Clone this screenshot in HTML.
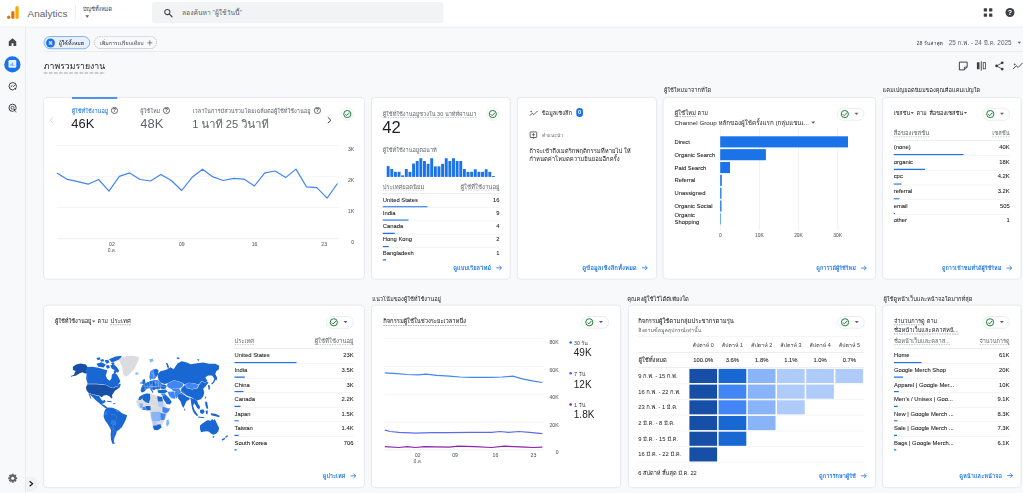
<!DOCTYPE html>
<html lang="th">
<head>
<meta charset="utf-8">
<title>Analytics</title>
<style>
html,body{margin:0;padding:0}
body{width:1023px;height:493px;overflow:hidden;background:#f8f9fa;position:relative;font-family:"Liberation Sans","Loma","Garuda","Tahoma","Leelawadee UI","Noto Sans Thai Looped","Noto Sans Thai","Noto Sans Thai UI",sans-serif;color:#202124}
#root{position:absolute;left:0;top:0;width:4092px;height:1972px;transform:scale(0.25);transform-origin:0 0;overflow:hidden}

.t{position:absolute;white-space:nowrap}
.card{background:#fff;border:3.2px solid #dfe1e5;border-radius:15.2px;box-sizing:border-box}
</style>
</head>
<body>
<div id="root">
<div style="position:absolute;left:0px;top:0px;width:4092px;height:106.8px;background:#fff;border-bottom:2.4px solid #dadce0;"></div>
<svg style="position:absolute;left:27.6px;top:24px;overflow:visible" width="48" height="52" viewBox="0 0 12 13"><rect x="8.4" y="0" width="3.3" height="12.9" rx="1.65" fill="#f9ab00"/><rect x="4.2" y="5.0" width="3.3" height="7.9" rx="1.65" fill="#e37400"/><circle cx="1.65" cy="11.25" r="1.65" fill="#e37400"/></svg>
<div class="t" style="top:34.12px;font-size:39.8px;line-height:39.8px;color:#5f6368;left:110.4px;">Analytics</div>
<div style="position:absolute;left:300px;top:20px;width:2px;height:58px;background:#dadce0;"></div>
<div class="t" style="top:27.12px;font-size:21.96px;line-height:21.96px;color:#3c4043;left:332px;width:117.96px;clip-path:inset(-16px -1.2px -16px -1.2px);">บัญชีทั้งหมด</div>
<svg style="position:absolute;left:340.8px;top:60.8px;overflow:visible" width="16" height="9.6" viewBox="0 0 4 2.4"><path d="M0 0h4l-2 2.4z" fill="#5f6368"/></svg>
<div style="position:absolute;left:608px;top:8px;width:1166px;height:84.8px;background:#f1f3f4;border-radius:12px;"></div>
<svg style="position:absolute;left:656px;top:35.2px;overflow:visible" width="34.4" height="34.4" viewBox="0 0 8.6 8.6"><circle cx="3.3" cy="3.3" r="2.6" fill="none" stroke="#44474a" stroke-width="1.05"/><path d="M5.2 5.2L8 8" stroke="#44474a" stroke-width="1.2" stroke-linecap="round"/></svg>
<div class="t" style="top:38.6px;font-size:26.84px;line-height:26.84px;color:#5f6368;left:728px;width:242.08px;clip-path:inset(-16px -1.2px -16px -1.2px);">ลองค้นหา "ผู้ใช้วันนี้"</div>
<svg style="position:absolute;left:3935.2px;top:33.2px;overflow:visible" width="35.2" height="34.4" viewBox="0 0 8.8 8.6"><rect x="0" y="0" width="3.3" height="3.3" rx="0.5" fill="#3c4043"/><rect x="0" y="5.2" width="3.3" height="3.3" rx="0.5" fill="#3c4043"/><rect x="5.3" y="0" width="3.3" height="3.3" rx="0.5" fill="#3c4043"/><rect x="5.3" y="5.2" width="3.3" height="3.3" rx="0.5" fill="#3c4043"/></svg>
<svg style="position:absolute;left:4022px;top:32px;overflow:visible" width="36" height="36" viewBox="0 0 9 9"><circle cx="4.5" cy="4.5" r="4.5" fill="#3c4043"/><text x="4.5" y="7" font-size="7" font-weight="700" text-anchor="middle" fill="#fff" font-family="Liberation Sans,sans-serif">?</text></svg>
<div style="position:absolute;left:0px;top:108.8px;width:100px;height:1863.2px;background:#f8f9fa;border-right:2.4px solid #dadce0;"></div>
<svg style="position:absolute;left:35.2px;top:153.2px;overflow:visible" width="30" height="30.8" viewBox="0 0 7.5 7.7"><path d="M3.75 0L0 3.2V7.7H2.8V5H4.7V7.7H7.5V3.2Z" fill="#46494d"/></svg>
<div style="position:absolute;left:17.2px;top:224.8px;width:65.2px;height:65.2px;background:#1a73e8;border-radius:50%;"></div>
<svg style="position:absolute;left:34.4px;top:240px;overflow:visible" width="31.2" height="31.2" viewBox="0 0 7.8 7.8"><rect x="0" y="0" width="7.8" height="7.8" rx="1.2" fill="#e8f0fe"/><path d="M2.5 5.9V4.2M3.9 5.9V2.6M5.3 5.9V4.8" stroke="#4285f4" stroke-width="0.8"/></svg>
<svg style="position:absolute;left:32.8px;top:327.2px;overflow:visible" width="36" height="36" viewBox="0 0 9 9"><circle cx="4.5" cy="4.5" r="3.7" fill="none" stroke="#3c4043" stroke-width="1"/><path d="M2.4 5.2L4 3.8L5 4.8L7.2 2.8" fill="none" stroke="#3c4043" stroke-width="0.9"/><circle cx="7" cy="7" r="1.6" fill="#f8f9fa"/><circle cx="7" cy="7" r="1" fill="#3c4043"/></svg>
<svg style="position:absolute;left:32.8px;top:414.4px;overflow:visible" width="36" height="36" viewBox="0 0 9 9"><circle cx="4.3" cy="4.3" r="3.6" fill="none" stroke="#3c4043" stroke-width="1"/><circle cx="4.3" cy="4.3" r="1.5" fill="none" stroke="#3c4043" stroke-width="0.9"/><path d="M4.6 4.6L8.8 6.2L7 7L8.6 8.8L7.9 9.2L6.4 7.5L5.6 8.8Z" fill="#3c4043" stroke="#f8f9fa" stroke-width="0.5"/></svg>
<svg style="position:absolute;left:33.2px;top:1894.8px;overflow:visible" width="35.6" height="35.6" viewBox="0 0 8.9 8.9"><g transform="translate(4.45,4.45)"><rect x="-1.05" y="-4.45" width="2.1" height="8.9" rx="0.4" fill="#5f6368" transform="rotate(0)"/><rect x="-1.05" y="-4.45" width="2.1" height="8.9" rx="0.4" fill="#5f6368" transform="rotate(45)"/><rect x="-1.05" y="-4.45" width="2.1" height="8.9" rx="0.4" fill="#5f6368" transform="rotate(90)"/><rect x="-1.05" y="-4.45" width="2.1" height="8.9" rx="0.4" fill="#5f6368" transform="rotate(135)"/><circle r="3.3" fill="#5f6368"/><circle r="1.55" fill="#f8f9fa"/></g></svg>
<div style="position:absolute;left:102.8px;top:1908px;width:44.8px;height:52.8px;background:#f1f3f4;border-radius:0 26.4px 26.4px 0;box-shadow:0 1.2px 3.2px rgba(60,64,67,.18);"></div>
<svg style="position:absolute;left:116px;top:1922.8px;overflow:visible" width="17.6" height="24" viewBox="0 0 4.4 6"><path d="M0.6 0.5L3.6 3L0.6 5.5" fill="none" stroke="#202124" stroke-width="1.25"/></svg>
<div style="position:absolute;left:175.2px;top:144.8px;width:184.8px;height:51.2px;background:#e8f0fe;border:2.4px solid #1a73e8;border-radius:26px;box-sizing:border-box;"></div>
<div style="position:absolute;left:183.6px;top:153.6px;width:36px;height:36px;background:#1a73e8;border-radius:50%;"></div>
<div class="t" style="top:162.6px;font-size:18.4px;line-height:18.4px;color:#fff;font-weight:700;left:185.6px;width:32px;text-align:center;">N</div>
<div class="t" style="top:162.76px;font-size:20.96px;line-height:20.96px;color:#202124;left:234.8px;width:104.04px;clip-path:inset(-16px -1.2px -16px -1.2px);">ผู้ใช้ทั้งหมด</div>
<svg style="position:absolute;left:376px;top:145.2px;overflow:visible" width="252" height="50.4" viewBox="0 0 63 12.6"><rect x="0.3" y="0.3" width="62.4" height="12" rx="6" fill="none" stroke="#80868b" stroke-width="0.55" stroke-dasharray="1.1 0.9"/></svg>
<div class="t" style="top:162.76px;font-size:21px;line-height:21px;color:#3c4043;left:400px;width:176.72px;clip-path:inset(-16px -1.2px -16px -1.2px);">เพิ่มการเปรียบเทียบ</div>
<svg style="position:absolute;left:589.2px;top:160.8px;overflow:visible" width="20.8" height="20.8" viewBox="0 0 5.2 5.2"><path d="M2.6 0V5.2M0 2.6H5.2" stroke="#3c4043" stroke-width="0.6"/></svg>
<div style="position:absolute;left:175.2px;top:204px;width:3916.8px;height:2px;background:#dadce0;"></div>
<div class="t" style="top:162.4px;font-size:20.92px;line-height:20.92px;color:#3c4043;left:3666px;width:108.04px;clip-path:inset(-16px -1.2px -16px -1.2px);">28 วันล่าสุด</div>
<div class="t" style="top:160.44px;font-size:25.4px;line-height:25.4px;color:#5f6368;left:3795.2px;width:252.84px;clip-path:inset(-16px -1.2px -16px -1.2px);">25 ก.พ. - 24 มี.ค. 2025</div>
<svg style="position:absolute;left:4070px;top:167.2px;overflow:visible" width="14.4" height="8" viewBox="0 0 3.6 2"><path d="M0 0h3.6l-1.8 2z" fill="#5f6368"/></svg>
<div class="t" style="top:247.12px;font-size:34.76px;line-height:34.76px;color:#202124;left:175.2px;width:247.24px;clip-path:inset(-16px -1.2px -16px -1.2px);">ภาพรวมรายงาน</div>
<svg style="position:absolute;left:175.2px;top:290.4px;overflow:visible" width="246" height="4" viewBox="0 0 61.5 1"><line x1="0" x2="61.5" y1="0.5" y2="0.5" stroke="#5f6368" stroke-width="0.6" stroke-dasharray="3.6 1.5"/></svg>
<svg style="position:absolute;left:3835.2px;top:245.6px;overflow:visible" width="36" height="36" viewBox="0 0 9 9"><path d="M0.6 0.6H8.4V5.6L5.6 8.4H0.6Z" fill="none" stroke="#3c4043" stroke-width="1" stroke-linejoin="round"/><path d="M5.6 8.4V5.6H8.4" fill="none" stroke="#3c4043" stroke-width="0.9"/></svg>
<svg style="position:absolute;left:3906px;top:244.8px;overflow:visible" width="38.4" height="38.4" viewBox="0 0 9.6 9.6"><rect x="0.4" y="1" width="2.6" height="7" fill="#3c4043"/><rect x="4.3" y="0" width="0.9" height="9.4" fill="#3c4043"/><rect x="6.7" y="1.4" width="2.3" height="6.2" fill="none" stroke="#3c4043" stroke-width="0.8"/></svg>
<svg style="position:absolute;left:3980px;top:244.8px;overflow:visible" width="36" height="37.6" viewBox="0 0 9 9.4"><circle cx="7.2" cy="1.6" r="1.4" fill="#3c4043"/><circle cx="1.6" cy="4.7" r="1.4" fill="#3c4043"/><circle cx="7.2" cy="7.8" r="1.4" fill="#3c4043"/><path d="M7.2 1.6L1.6 4.7L7.2 7.8" fill="none" stroke="#3c4043" stroke-width="0.8"/></svg>
<svg style="position:absolute;left:4051.2px;top:246.4px;overflow:visible" width="40.8" height="34.4" viewBox="0 0 10.2 8.6"><path d="M0.3 7.6L3.4 4.2L5.4 6L9.8 1.4" fill="none" stroke="#3c4043" stroke-width="0.9"/><path d="M2 1.6l0.4 0.9 0.9 0.4-0.9 0.4-0.4 0.9-0.4-0.9-0.9-0.4 0.9-0.4z" fill="#3c4043"/></svg>
<div class="card" style="position:absolute;left:173.2px;top:388.4px;width:1285.6px;height:730px;"></div>
<div class="card" style="position:absolute;left:1484px;top:388.4px;width:557.6px;height:730px;"></div>
<div class="card" style="position:absolute;left:2068px;top:388.4px;width:560.4px;height:730px;"></div>
<div class="card" style="position:absolute;left:2651.2px;top:388.4px;width:852.4px;height:730px;"></div>
<div class="card" style="position:absolute;left:3528.8px;top:388.4px;width:556.8px;height:730px;"></div>
<div class="card" style="position:absolute;left:173.2px;top:1219.2px;width:1285.6px;height:732.4px;"></div>
<div class="card" style="position:absolute;left:1484px;top:1219.2px;width:1000px;height:732.4px;"></div>
<div class="card" style="position:absolute;left:2511.6px;top:1219.2px;width:992px;height:732.4px;"></div>
<div class="card" style="position:absolute;left:3528.8px;top:1219.2px;width:556.8px;height:732.4px;"></div>
<div style="position:absolute;left:288px;top:389.2px;width:181.2px;height:5.6px;background:#1a73e8;"></div>
<div class="t" style="top:433.36px;font-size:22.36px;line-height:22.36px;color:#1a73e8;left:286.8px;width:147.32px;clip-path:inset(-16px -1.2px -16px -1.2px);-webkit-text-stroke:0.16px currentColor;">ผู้ใช้ที่ใช้งานอยู่</div>
<svg style="position:absolute;left:443.6px;top:428.4px;overflow:visible" width="27.6" height="27.6" viewBox="0 0 6.4 6.4"><circle cx="3.2" cy="3.2" r="2.85" fill="none" stroke="#3c4043" stroke-width="0.7"/><text x="3.2" y="4.95" font-size="4.9" text-anchor="middle" fill="#3c4043" font-family="Liberation Sans,sans-serif" font-weight="700">?</text></svg>
<div class="t" style="top:470.2px;font-size:51.6px;line-height:51.6px;color:#202124;left:285.2px;">46K</div>
<div class="t" style="top:433.32px;font-size:22.48px;line-height:22.48px;color:#5f6368;left:561.2px;width:82.04px;clip-path:inset(-16px -1.2px -16px -1.2px);">ผู้ใช้ใหม่</div>
<svg style="position:absolute;left:652px;top:428.4px;overflow:visible" width="27.6" height="27.6" viewBox="0 0 6.4 6.4"><circle cx="3.2" cy="3.2" r="2.85" fill="none" stroke="#3c4043" stroke-width="0.7"/><text x="3.2" y="4.95" font-size="4.9" text-anchor="middle" fill="#3c4043" font-family="Liberation Sans,sans-serif" font-weight="700">?</text></svg>
<div class="t" style="top:470.2px;font-size:51.6px;line-height:51.6px;color:#5f6368;left:561.2px;">48K</div>
<div class="t" style="top:433.32px;font-size:22.48px;line-height:22.48px;color:#5f6368;left:770.8px;width:473.4px;clip-path:inset(-16px -1.2px -16px -1.2px);">เวลาในการมีส่วนร่วมโดยเฉลี่ยต่อผู้ใช้ที่ใช้งานอยู่</div>
<svg style="position:absolute;left:1256.4px;top:428.4px;overflow:visible" width="27.6" height="27.6" viewBox="0 0 6.4 6.4"><circle cx="3.2" cy="3.2" r="2.85" fill="none" stroke="#3c4043" stroke-width="0.7"/><text x="3.2" y="4.95" font-size="4.9" text-anchor="middle" fill="#3c4043" font-family="Liberation Sans,sans-serif" font-weight="700">?</text></svg>
<div class="t" style="top:476.4px;font-size:44.52px;line-height:44.52px;color:#5f6368;left:769.2px;width:307.96px;clip-path:inset(-16px -1.2px -16px -1.2px);">1 นาที 25 วินาที</div>
<svg style="position:absolute;left:199.2px;top:468.4px;overflow:visible" width="14.4" height="25.6" viewBox="0 0 3.6 6.4"><path d="M3.2 0.4L0.5 3.2L3.2 6" fill="none" stroke="#bdc1c6" stroke-width="0.7"/></svg>
<svg style="position:absolute;left:1309.6px;top:468.4px;overflow:visible" width="14.4" height="25.6" viewBox="0 0 3.6 6.4"><path d="M0.3 0.3L3.4 3.3L0.3 6.3" fill="none" stroke="#3c4043" stroke-width="1.0"/></svg>
<div style="position:absolute;left:1363.2px;top:430.4px;width:51.2px;height:51.2px;background:#fff;border-radius:50%;border:2.4px solid #dadce0;box-sizing:border-box;"></div>
<svg style="position:absolute;left:1371.6px;top:438.8px;overflow:visible" width="34.4" height="34.4" viewBox="0 0 8.6 8.6"><circle cx="4.3" cy="4.3" r="3.6" fill="none" stroke="#188038" stroke-width="1.0"/><path d="M2.3 4.5L3.7 5.9L6.5 2.9" fill="none" stroke="#188038" stroke-width="1.0"/></svg>
<svg style="position:absolute;left:0px;top:0px;overflow:visible" width="4092" height="1972" viewBox="0 0 1023 493"><line x1="56.9" x2="339" y1="145.4" y2="145.4" stroke="#e8eaed" stroke-width="0.5"/><line x1="56.9" x2="339" y1="176.4" y2="176.4" stroke="#e8eaed" stroke-width="0.5"/><line x1="56.9" x2="339" y1="207.5" y2="207.5" stroke="#e8eaed" stroke-width="0.5"/><line x1="56.9" x2="339" y1="238.7" y2="238.7" stroke="#dadce0" stroke-width="0.5"/><polyline points="57.0,172.9 67.4,179.4 77.8,181.6 88.2,184.2 98.6,179.5 109.0,191.2 119.3,176.4 129.7,172.9 140.1,179.5 150.5,181.0 160.9,174.4 171.3,180.5 181.7,190.5 192.1,177.3 202.5,169.2 212.9,176.9 223.2,180.5 233.6,178.3 244.0,179.1 254.4,186.0 264.8,172.8 275.2,171.0 285.6,177.6 296.0,169.1 306.4,186.8 316.8,187.6 327.1,198.1 337.5,183.5" fill="none" stroke="#4285f4" stroke-width="1.2" stroke-linejoin="round"/></svg>
<div class="t" style="top:587px;font-size:20.4px;line-height:20.4px;color:#5f6368;right:2675.2px;text-align:right;-webkit-text-stroke:0.28px currentColor;">3K</div>
<div class="t" style="top:711px;font-size:20.4px;line-height:20.4px;color:#5f6368;right:2675.2px;text-align:right;-webkit-text-stroke:0.28px currentColor;">2K</div>
<div class="t" style="top:835.4px;font-size:20.4px;line-height:20.4px;color:#5f6368;right:2675.2px;text-align:right;-webkit-text-stroke:0.28px currentColor;">1K</div>
<div class="t" style="top:960.2px;font-size:20.4px;line-height:20.4px;color:#5f6368;right:2675.2px;text-align:right;-webkit-text-stroke:0.28px currentColor;">0</div>
<div class="t" style="top:965px;font-size:20.4px;line-height:20.4px;color:#5f6368;left:407.6px;width:80px;text-align:center;-webkit-text-stroke:0.28px currentColor;">02</div>
<div class="t" style="top:965px;font-size:20.4px;line-height:20.4px;color:#5f6368;left:687.2px;width:80px;text-align:center;-webkit-text-stroke:0.28px currentColor;">09</div>
<div class="t" style="top:965px;font-size:20.4px;line-height:20.4px;color:#5f6368;left:978.4px;width:80px;text-align:center;-webkit-text-stroke:0.28px currentColor;">16</div>
<div class="t" style="top:965px;font-size:20.4px;line-height:20.4px;color:#5f6368;left:1256.8px;width:80px;text-align:center;-webkit-text-stroke:0.28px currentColor;">23</div>
<div class="t" style="top:989.96px;font-size:19.2px;line-height:19.2px;color:#5f6368;left:428.52px;width:38.16px;text-align:center;clip-path:inset(-16px -1.2px -16px -1.2px);">มี.ค.</div>
<div class="t" style="top:444.52px;font-size:22.44px;line-height:22.44px;color:#5f6368;left:1531.2px;width:376.36px;clip-path:inset(-16px -1.2px -16px -1.2px);">ผู้ใช้ที่ใช้งานอยู่ช่วงใน 30 นาทีที่ผ่านมา</div>
<div style="position:absolute;left:1531.2px;top:468.8px;width:375.2px;height:2px;border-top:2px dashed #9aa0a6;"></div>
<div style="position:absolute;left:1945.6px;top:430.4px;width:51.2px;height:51.2px;background:#fff;border-radius:50%;border:2.4px solid #dadce0;box-sizing:border-box;"></div>
<svg style="position:absolute;left:1954px;top:438.8px;overflow:visible" width="34.4" height="34.4" viewBox="0 0 8.6 8.6"><circle cx="4.3" cy="4.3" r="3.6" fill="none" stroke="#188038" stroke-width="1.0"/><path d="M2.3 4.5L3.7 5.9L6.5 2.9" fill="none" stroke="#188038" stroke-width="1.0"/></svg>
<div class="t" style="top:474.8px;font-size:66.4px;line-height:66.4px;color:#202124;left:1529.2px;">42</div>
<div class="t" style="top:588.56px;font-size:22.36px;line-height:22.36px;color:#5f6368;left:1531.2px;width:217.84px;clip-path:inset(-16px -1.2px -16px -1.2px);">ผู้ใช้ที่ใช้งานอยู่ต่อนาที</div>
<svg style="position:absolute;left:0px;top:0px;overflow:visible" width="4092" height="1972" viewBox="0 0 1023 493"><rect x="386.70" y="166.10" width="2.9" height="10.80" fill="#1a73e8"/><rect x="390.33" y="169.02" width="2.9" height="7.88" fill="#1a73e8"/><rect x="393.96" y="171.82" width="2.9" height="5.08" fill="#1a73e8"/><rect x="397.59" y="171.82" width="2.9" height="5.08" fill="#1a73e8"/><rect x="401.22" y="175.38" width="2.9" height="1.52" fill="#1a73e8"/><rect x="404.85" y="169.02" width="2.9" height="7.88" fill="#1a73e8"/><rect x="408.48" y="171.82" width="2.9" height="5.08" fill="#1a73e8"/><rect x="412.11" y="163.56" width="2.9" height="13.34" fill="#1a73e8"/><rect x="415.74" y="161.02" width="2.9" height="15.88" fill="#1a73e8"/><rect x="419.37" y="158.22" width="2.9" height="18.68" fill="#1a73e8"/><rect x="423.00" y="161.02" width="2.9" height="15.88" fill="#1a73e8"/><rect x="426.63" y="163.81" width="2.9" height="13.09" fill="#1a73e8"/><rect x="430.26" y="158.22" width="2.9" height="18.68" fill="#1a73e8"/><rect x="433.89" y="166.35" width="2.9" height="10.55" fill="#1a73e8"/><rect x="437.52" y="166.35" width="2.9" height="10.55" fill="#1a73e8"/><rect x="441.15" y="163.81" width="2.9" height="13.09" fill="#1a73e8"/><rect x="444.78" y="158.22" width="2.9" height="18.68" fill="#1a73e8"/><rect x="448.41" y="161.02" width="2.9" height="15.88" fill="#1a73e8"/><rect x="452.04" y="158.22" width="2.9" height="18.68" fill="#1a73e8"/><rect x="455.67" y="161.02" width="2.9" height="15.88" fill="#1a73e8"/><rect x="459.30" y="161.02" width="2.9" height="15.88" fill="#1a73e8"/><rect x="462.93" y="169.02" width="2.9" height="7.88" fill="#1a73e8"/><rect x="466.56" y="171.82" width="2.9" height="5.08" fill="#1a73e8"/><rect x="470.19" y="171.82" width="2.9" height="5.08" fill="#1a73e8"/><rect x="473.82" y="169.28" width="2.9" height="7.62" fill="#1a73e8"/><rect x="477.45" y="171.82" width="2.9" height="5.08" fill="#1a73e8"/><rect x="481.08" y="171.82" width="2.9" height="5.08" fill="#1a73e8"/><rect x="484.71" y="169.28" width="2.9" height="7.62" fill="#1a73e8"/><rect x="488.34" y="171.82" width="2.9" height="5.08" fill="#1a73e8"/><rect x="491.97" y="176.01" width="2.9" height="0.89" fill="#1a73e8"/></svg>
<div class="t" style="top:735.32px;font-size:23.36px;line-height:23.36px;color:#5f6368;left:1531.2px;width:168.08px;clip-path:inset(-16px -1.2px -16px -1.2px);">ประเทศยอดนิยม</div>
<div style="position:absolute;left:1531.2px;top:759.2px;width:166px;height:2px;border-top:2px dashed #9aa0a6;"></div>
<div class="t" style="top:735.04px;font-size:24px;line-height:24px;color:#5f6368;left:1840.04px;width:157.96px;text-align:right;clip-path:inset(-16px -1.2px -16px -1.2px);">ผู้ใช้ที่ใช้งานอยู่</div>
<div style="position:absolute;left:1842px;top:759.2px;width:156px;height:2px;border-top:2px dashed #9aa0a6;"></div>
<div style="position:absolute;left:1531.2px;top:774.4px;width:466.8px;height:2px;background:#dadce0;"></div>
<div class="t" style="top:787.52px;font-size:23.4px;line-height:23.4px;color:#202124;left:1531.2px;-webkit-text-stroke:0.28px currentColor;">United States</div>
<div class="t" style="top:787.52px;font-size:23.4px;line-height:23.4px;color:#202124;right:2094px;text-align:right;-webkit-text-stroke:0.28px currentColor;">16</div>
<div style="position:absolute;left:1531.2px;top:824.8px;width:178.8px;height:5px;background:#1a73e8;"></div>
<div style="position:absolute;left:1531.2px;top:829.6px;width:466.8px;height:2px;background:#e8eaed;"></div>
<div class="t" style="top:840.48px;font-size:23.4px;line-height:23.4px;color:#202124;left:1531.2px;-webkit-text-stroke:0.28px currentColor;">India</div>
<div class="t" style="top:840.48px;font-size:23.4px;line-height:23.4px;color:#202124;right:2094px;text-align:right;-webkit-text-stroke:0.28px currentColor;">9</div>
<div style="position:absolute;left:1531.2px;top:877.8px;width:102.8px;height:5px;background:#1a73e8;"></div>
<div style="position:absolute;left:1531.2px;top:882.6px;width:466.8px;height:2px;background:#e8eaed;"></div>
<div class="t" style="top:893.52px;font-size:23.4px;line-height:23.4px;color:#202124;left:1531.2px;-webkit-text-stroke:0.28px currentColor;">Canada</div>
<div class="t" style="top:893.52px;font-size:23.4px;line-height:23.4px;color:#202124;right:2094px;text-align:right;-webkit-text-stroke:0.28px currentColor;">4</div>
<div style="position:absolute;left:1531.2px;top:930.8px;width:47.6px;height:5px;background:#1a73e8;"></div>
<div style="position:absolute;left:1531.2px;top:935.6px;width:466.8px;height:2px;background:#e8eaed;"></div>
<div class="t" style="top:946.48px;font-size:23.4px;line-height:23.4px;color:#202124;left:1531.2px;-webkit-text-stroke:0.28px currentColor;">Hong Kong</div>
<div class="t" style="top:946.48px;font-size:23.4px;line-height:23.4px;color:#202124;right:2094px;text-align:right;-webkit-text-stroke:0.28px currentColor;">2</div>
<div style="position:absolute;left:1531.2px;top:983.8px;width:23.6px;height:5px;background:#1a73e8;"></div>
<div style="position:absolute;left:1531.2px;top:988.6px;width:466.8px;height:2px;background:#e8eaed;"></div>
<div class="t" style="top:999.52px;font-size:23.4px;line-height:23.4px;color:#202124;left:1531.2px;-webkit-text-stroke:0.28px currentColor;">Bangladesh</div>
<div class="t" style="top:999.52px;font-size:23.4px;line-height:23.4px;color:#202124;right:2094px;text-align:right;-webkit-text-stroke:0.28px currentColor;">1</div>
<div style="position:absolute;left:1531.2px;top:1036.8px;width:12.8px;height:5px;background:#1a73e8;"></div>
<svg style="position:absolute;left:1985.2px;top:1060.8px;overflow:visible" width="24" height="20.8" viewBox="0 0 6 5.2"><path d="M0 2.6H5.2M3 0.4L5.3 2.6L3 4.8" fill="none" stroke="#1a73e8" stroke-width="0.8"/></svg>
<div class="t" style="top:1060.92px;font-size:23.32px;line-height:23.32px;color:#1a73e8;font-weight:700;left:1810.48px;width:153.92px;text-align:right;clip-path:inset(-16px -1.2px -16px -1.2px);">ดูแบบเรียลไทม์</div>
<svg style="position:absolute;left:2118px;top:440px;overflow:visible" width="33.6" height="25.6" viewBox="0 0 8.4 6.4"><path d="M0.3 5.8L2.8 3.2L4.4 4.6L8 1" fill="none" stroke="#3c4043" stroke-width="0.8"/><path d="M1.6 0.4l0.35 0.8 0.8 0.35-0.8 0.35-0.35 0.8-0.35-0.8-0.8-0.35 0.8-0.35z" fill="#3c4043"/></svg>
<div class="t" style="top:439.88px;font-size:22.96px;line-height:22.96px;color:#202124;left:2166.8px;width:123.32px;clip-path:inset(-16px -1.2px -16px -1.2px);">ข้อมูลเชิงลึก</div>
<div style="position:absolute;left:2304.8px;top:432px;width:27.2px;height:36px;background:#1a73e8;border-radius:13.2px;"></div>
<div class="t" style="top:439.2px;font-size:22.4px;line-height:22.4px;color:#fff;font-weight:700;left:2302.4px;width:32px;text-align:center;">0</div>
<svg style="position:absolute;left:2118.8px;top:526.4px;overflow:visible" width="29.6" height="31.2" viewBox="0 0 7.4 7.8"><rect x="0.4" y="0.4" width="6.6" height="5.6" rx="0.6" fill="none" stroke="#3c4043" stroke-width="0.8"/><path d="M2.9 6L3.7 7.5L4.5 6" fill="#3c4043"/><path d="M3.7 1.6V4.8M2.1 3.2H5.3" stroke="#3c4043" stroke-width="0.7"/></svg>
<div class="t" style="top:531.08px;font-size:19.36px;line-height:19.36px;color:#5f6368;left:2167.6px;width:86.04px;clip-path:inset(-16px -1.2px -16px -1.2px);">คำแนะนำ</div>
<div class="t" style="top:589.92px;font-size:23.84px;line-height:23.84px;color:#202124;left:2116.8px;width:408.36px;clip-path:inset(-16px -1.2px -16px -1.2px);">ถ้าจะเข้าถึงเมตริกพฤติกรรมที่หายไป ให้</div>
<div class="t" style="top:624.04px;font-size:23.56px;line-height:23.56px;color:#202124;left:2116.8px;width:363.92px;clip-path:inset(-16px -1.2px -16px -1.2px);">กำหนดค่าโหมดความยินยอมอีกครั้ง</div>
<svg style="position:absolute;left:2568px;top:1060.8px;overflow:visible" width="24" height="20.8" viewBox="0 0 6 5.2"><path d="M0 2.6H5.2M3 0.4L5.3 2.6L3 4.8" fill="none" stroke="#1a73e8" stroke-width="0.8"/></svg>
<div class="t" style="top:1060.56px;font-size:24.16px;line-height:24.16px;color:#1a73e8;font-weight:700;left:2326.72px;width:220.48px;text-align:right;clip-path:inset(-16px -1.2px -16px -1.2px);">ดูข้อมูลเชิงลึกทั้งหมด</div>
<div class="t" style="top:349.24px;font-size:22.68px;line-height:22.68px;color:#202124;left:2655.6px;width:190.92px;clip-path:inset(-16px -1.2px -16px -1.2px);">ผู้ใช้ใหม่มาจากที่ใด</div>
<div class="t" style="top:439.32px;font-size:24.28px;line-height:24.28px;color:#202124;left:2698px;width:88.44px;clip-path:inset(-16px -1.2px -16px -1.2px);">ผู้ใช้ใหม่</div>
<div style="position:absolute;left:2698px;top:464.8px;width:86.4px;height:2px;border-top:2px dashed #5f6368;"></div>
<div class="t" style="top:440.24px;font-size:22.2px;line-height:22.2px;color:#202124;left:2790.4px;width:43.52px;clip-path:inset(-16px -1.2px -16px -1.2px);">ตาม</div>
<div class="t" style="top:477.84px;font-size:24.88px;line-height:24.88px;color:#202124;left:2698px;width:539.76px;clip-path:inset(-16px -1.2px -16px -1.2px);">Channel Group หลักของผู้ใช้ครั้งแรก (กลุ่มแชนเ...</div>
<svg style="position:absolute;left:3245.2px;top:485.6px;overflow:visible" width="16" height="8.8" viewBox="0 0 4 2.2"><path d="M0 0h4l-2 2.2z" fill="#5f6368"/></svg>
<div style="position:absolute;left:3348px;top:431.6px;width:109.2px;height:50px;background:#fff;border:2.8px solid #d5d8dc;border-radius:26px;box-sizing:border-box;"></div>
<svg style="position:absolute;left:3361.6px;top:438.6px;overflow:visible" width="34.4" height="34.4" viewBox="0 0 8.6 8.6"><circle cx="4.3" cy="4.3" r="3.6" fill="none" stroke="#188038" stroke-width="1.0"/><path d="M2.3 4.5L3.7 5.9L6.5 2.9" fill="none" stroke="#188038" stroke-width="1.0"/></svg>
<svg style="position:absolute;left:3417.6px;top:451.4px;overflow:visible" width="16" height="9.2" viewBox="0 0 4 2.3"><path d="M0 0h4l-2 2.3z" fill="#5f6368"/></svg>
<div class="t" style="top:555.88px;font-size:23.4px;line-height:23.4px;color:#202124;left:2698px;-webkit-text-stroke:0.28px currentColor;">Direct</div>
<div class="t" style="top:607.24px;font-size:23.4px;line-height:23.4px;color:#202124;left:2698px;-webkit-text-stroke:0.28px currentColor;">Organic Search</div>
<div class="t" style="top:658.64px;font-size:23.4px;line-height:23.4px;color:#202124;left:2698px;-webkit-text-stroke:0.28px currentColor;">Paid Search</div>
<div class="t" style="top:709.96px;font-size:23.4px;line-height:23.4px;color:#202124;left:2698px;-webkit-text-stroke:0.28px currentColor;">Referral</div>
<div class="t" style="top:761.36px;font-size:23.4px;line-height:23.4px;color:#202124;left:2698px;-webkit-text-stroke:0.28px currentColor;">Unassigned</div>
<div class="t" style="top:812.68px;font-size:23.4px;line-height:23.4px;color:#202124;left:2698px;-webkit-text-stroke:0.28px currentColor;">Organic Social</div>
<svg style="position:absolute;left:0px;top:0px;overflow:visible" width="4092" height="1972" viewBox="0 0 1023 493"><line x1="720.25" x2="720.25" y1="128" y2="230.3" stroke="#e4e6e9" stroke-width="0.55"/><line x1="759.4" x2="759.4" y1="128" y2="230.3" stroke="#e4e6e9" stroke-width="0.55"/><line x1="798.55" x2="798.55" y1="128" y2="230.3" stroke="#e4e6e9" stroke-width="0.55"/><line x1="837.7" x2="837.7" y1="128" y2="230.3" stroke="#e4e6e9" stroke-width="0.55"/><rect x="720.2" y="136.30" width="127.80" height="11.1" fill="#1a73e8"/><rect x="720.2" y="149.14" width="45.70" height="11.1" fill="#1a73e8"/><rect x="720.2" y="161.98" width="9.80" height="11.1" fill="#1a73e8"/><rect x="720.2" y="174.82" width="1.60" height="11.1" fill="#1a73e8"/><rect x="720.2" y="187.66" width="1.30" height="11.1" fill="#1a73e8"/><rect x="720.2" y="200.50" width="1.30" height="11.1" fill="#1a73e8"/><rect x="720.2" y="213.34" width="0.60" height="11.1" fill="#1a73e8"/></svg>
<div class="t" style="top:849.08px;font-size:23.4px;line-height:23.4px;color:#202124;left:2698px;-webkit-text-stroke:0.28px currentColor;">Organic</div>
<div class="t" style="top:875.52px;font-size:23.4px;line-height:23.4px;color:#202124;left:2698px;-webkit-text-stroke:0.28px currentColor;">Shopping</div>
<div class="t" style="top:932.6px;font-size:19.6px;line-height:19.6px;color:#5f6368;left:2841.2px;width:80px;text-align:center;-webkit-text-stroke:0.28px currentColor;">0</div>
<div class="t" style="top:932.6px;font-size:19.6px;line-height:19.6px;color:#5f6368;left:2997.6px;width:80px;text-align:center;-webkit-text-stroke:0.28px currentColor;">10K</div>
<div class="t" style="top:932.6px;font-size:19.6px;line-height:19.6px;color:#5f6368;left:3154px;width:80px;text-align:center;-webkit-text-stroke:0.28px currentColor;">20K</div>
<div class="t" style="top:932.6px;font-size:19.6px;line-height:19.6px;color:#5f6368;left:3310.4px;width:80px;text-align:center;-webkit-text-stroke:0.28px currentColor;">30K</div>
<svg style="position:absolute;left:3444px;top:1061.6px;overflow:visible" width="24" height="20.8" viewBox="0 0 6 5.2"><path d="M0 2.6H5.2M3 0.4L5.3 2.6L3 4.8" fill="none" stroke="#1a73e8" stroke-width="0.8"/></svg>
<div class="t" style="top:1062.24px;font-size:22.2px;line-height:22.2px;color:#1a73e8;font-weight:700;left:3263.16px;width:160.04px;text-align:right;clip-path:inset(-16px -1.2px -16px -1.2px);">ดูการได้ผู้ใช้ใหม่</div>
<div class="t" style="top:349.2px;font-size:22.76px;line-height:22.76px;color:#202124;left:3530.4px;width:392.2px;clip-path:inset(-16px -1.2px -16px -1.2px);">แคมเปญยอดนิยมของคุณคือแคมเปญใด</div>
<div class="t" style="top:440.64px;font-size:22.2px;line-height:22.2px;color:#202124;left:3574.8px;width:68.44px;clip-path:inset(-16px -1.2px -16px -1.2px);">เซสชัน</div>
<svg style="position:absolute;left:3642.4px;top:448px;overflow:visible" width="13.6" height="8" viewBox="0 0 3.4 2"><path d="M0 0h3.4l-1.7 2z" fill="#5f6368"/></svg>
<div class="t" style="top:440.64px;font-size:22.2px;line-height:22.2px;color:#202124;left:3665.6px;width:43.52px;clip-path:inset(-16px -1.2px -16px -1.2px);">ตาม</div>
<div class="t" style="top:440.44px;font-size:22.64px;line-height:22.64px;color:#202124;left:3717.6px;width:137.32px;clip-path:inset(-16px -1.2px -16px -1.2px);-webkit-text-stroke:0.16px currentColor;">สื่อของเซสชัน</div>
<svg style="position:absolute;left:3855.2px;top:448px;overflow:visible" width="13.6" height="8" viewBox="0 0 3.4 2"><path d="M0 0h3.4l-1.7 2z" fill="#5f6368"/></svg>
<div style="position:absolute;left:3930.4px;top:431.6px;width:108.8px;height:50px;background:#fff;border:2.8px solid #d5d8dc;border-radius:26px;box-sizing:border-box;"></div>
<svg style="position:absolute;left:3944px;top:438.6px;overflow:visible" width="34.4" height="34.4" viewBox="0 0 8.6 8.6"><circle cx="4.3" cy="4.3" r="3.6" fill="none" stroke="#188038" stroke-width="1.0"/><path d="M2.3 4.5L3.7 5.9L6.5 2.9" fill="none" stroke="#188038" stroke-width="1.0"/></svg>
<svg style="position:absolute;left:4000px;top:451.4px;overflow:visible" width="16" height="9.2" viewBox="0 0 4 2.3"><path d="M0 0h4l-2 2.3z" fill="#5f6368"/></svg>
<div class="t" style="top:521.12px;font-size:23.84px;line-height:23.84px;color:#5f6368;left:3574.8px;width:144.48px;clip-path:inset(-16px -1.2px -16px -1.2px);">สื่อของเซสชัน</div>
<div style="position:absolute;left:3574.8px;top:545.6px;width:142.4px;height:2px;border-top:2px dashed #9aa0a6;"></div>
<div class="t" style="top:521.32px;font-size:23.4px;line-height:23.4px;color:#5f6368;left:3966.76px;width:72.04px;text-align:right;clip-path:inset(-16px -1.2px -16px -1.2px);">เซสชัน</div>
<div style="position:absolute;left:3968.8px;top:545.6px;width:70px;height:2px;border-top:2px dashed #9aa0a6;"></div>
<div style="position:absolute;left:3574.8px;top:560.8px;width:464px;height:2px;background:#dadce0;"></div>
<div class="t" style="top:576.28px;font-size:23.4px;line-height:23.4px;color:#202124;left:3574.8px;-webkit-text-stroke:0.28px currentColor;">(none)</div>
<div class="t" style="top:576.28px;font-size:23.4px;line-height:23.4px;color:#202124;right:53.2px;text-align:right;-webkit-text-stroke:0.28px currentColor;">40K</div>
<div style="position:absolute;left:3574.8px;top:616.4px;width:279.2px;height:5px;background:#1a73e8;"></div>
<div style="position:absolute;left:3574.8px;top:621.6px;width:464px;height:2px;background:#e8eaed;"></div>
<div class="t" style="top:635.08px;font-size:23.4px;line-height:23.4px;color:#202124;left:3574.8px;-webkit-text-stroke:0.28px currentColor;">organic</div>
<div class="t" style="top:635.08px;font-size:23.4px;line-height:23.4px;color:#202124;right:53.2px;text-align:right;-webkit-text-stroke:0.28px currentColor;">18K</div>
<div style="position:absolute;left:3574.8px;top:675.2px;width:124.8px;height:5px;background:#1a73e8;"></div>
<div style="position:absolute;left:3574.8px;top:680.4px;width:464px;height:2px;background:#e8eaed;"></div>
<div class="t" style="top:693.88px;font-size:23.4px;line-height:23.4px;color:#202124;left:3574.8px;-webkit-text-stroke:0.28px currentColor;">cpc</div>
<div class="t" style="top:693.88px;font-size:23.4px;line-height:23.4px;color:#202124;right:53.2px;text-align:right;-webkit-text-stroke:0.28px currentColor;">4.2K</div>
<div style="position:absolute;left:3574.8px;top:734px;width:31.6px;height:5px;background:#1a73e8;"></div>
<div style="position:absolute;left:3574.8px;top:739.2px;width:464px;height:2px;background:#e8eaed;"></div>
<div class="t" style="top:752.68px;font-size:23.4px;line-height:23.4px;color:#202124;left:3574.8px;-webkit-text-stroke:0.28px currentColor;">referral</div>
<div class="t" style="top:752.68px;font-size:23.4px;line-height:23.4px;color:#202124;right:53.2px;text-align:right;-webkit-text-stroke:0.28px currentColor;">3.2K</div>
<div style="position:absolute;left:3574.8px;top:792.8px;width:23.2px;height:5px;background:#1a73e8;"></div>
<div style="position:absolute;left:3574.8px;top:798px;width:464px;height:2px;background:#e8eaed;"></div>
<div class="t" style="top:811.52px;font-size:23.4px;line-height:23.4px;color:#202124;left:3574.8px;-webkit-text-stroke:0.28px currentColor;">email</div>
<div class="t" style="top:811.52px;font-size:23.4px;line-height:23.4px;color:#202124;right:53.2px;text-align:right;-webkit-text-stroke:0.28px currentColor;">505</div>
<div style="position:absolute;left:3574.8px;top:851.6px;width:5.2px;height:5px;background:#1a73e8;"></div>
<div style="position:absolute;left:3574.8px;top:856.8px;width:464px;height:2px;background:#e8eaed;"></div>
<div class="t" style="top:870.28px;font-size:23.4px;line-height:23.4px;color:#202124;left:3574.8px;-webkit-text-stroke:0.28px currentColor;">other</div>
<div class="t" style="top:870.28px;font-size:23.4px;line-height:23.4px;color:#202124;right:53.2px;text-align:right;-webkit-text-stroke:0.28px currentColor;">1</div>
<svg style="position:absolute;left:4026.4px;top:1061.6px;overflow:visible" width="24" height="20.8" viewBox="0 0 6 5.2"><path d="M0 2.6H5.2M3 0.4L5.3 2.6L3 4.8" fill="none" stroke="#1a73e8" stroke-width="0.8"/></svg>
<div class="t" style="top:1062.2px;font-size:22.24px;line-height:22.24px;color:#1a73e8;font-weight:700;left:3765.56px;width:240.04px;text-align:right;clip-path:inset(-16px -1.2px -16px -1.2px);">ดูการเข้าชมที่ได้ผู้ใช้ใหม่</div>
<div class="t" style="top:1273.32px;font-size:22.48px;line-height:22.48px;color:#202124;left:219.6px;width:148.08px;clip-path:inset(-16px -1.2px -16px -1.2px);-webkit-text-stroke:0.16px currentColor;">ผู้ใช้ที่ใช้งานอยู่</div>
<svg style="position:absolute;left:368px;top:1281.6px;overflow:visible" width="13.6" height="8" viewBox="0 0 3.4 2"><path d="M0 0h3.4l-1.7 2z" fill="#5f6368"/></svg>
<div class="t" style="top:1273.44px;font-size:22.2px;line-height:22.2px;color:#202124;left:390.4px;width:43.52px;clip-path:inset(-16px -1.2px -16px -1.2px);">ตาม</div>
<div class="t" style="top:1272.56px;font-size:24.16px;line-height:24.16px;color:#202124;left:442.4px;width:82.8px;clip-path:inset(-16px -1.2px -16px -1.2px);">ประเทศ</div>
<div style="position:absolute;left:442.4px;top:1298.4px;width:80.8px;height:2px;border-top:2px dashed #5f6368;"></div>
<div style="position:absolute;left:1304.8px;top:1264.8px;width:109.6px;height:49.6px;background:#fff;border:2.8px solid #d5d8dc;border-radius:26px;box-sizing:border-box;"></div>
<svg style="position:absolute;left:1318.4px;top:1271.6px;overflow:visible" width="34.4" height="34.4" viewBox="0 0 8.6 8.6"><circle cx="4.3" cy="4.3" r="3.6" fill="none" stroke="#188038" stroke-width="1.0"/><path d="M2.3 4.5L3.7 5.9L6.5 2.9" fill="none" stroke="#188038" stroke-width="1.0"/></svg>
<svg style="position:absolute;left:1374.4px;top:1284.4px;overflow:visible" width="16" height="9.2" viewBox="0 0 4 2.3"><path d="M0 0h4l-2 2.3z" fill="#5f6368"/></svg>
<div class="t" style="top:1353px;font-size:23.2px;line-height:23.2px;color:#5f6368;left:938.4px;width:79.6px;clip-path:inset(-16px -1.2px -16px -1.2px);">ประเทศ</div>
<div style="position:absolute;left:938.4px;top:1377.2px;width:77.6px;height:2px;border-top:2px dashed #9aa0a6;"></div>
<div class="t" style="top:1352.64px;font-size:24px;line-height:24px;color:#5f6368;left:1256.44px;width:157.96px;text-align:right;clip-path:inset(-16px -1.2px -16px -1.2px);">ผู้ใช้ที่ใช้งานอยู่</div>
<div style="position:absolute;left:1258.4px;top:1377.2px;width:156px;height:2px;border-top:2px dashed #9aa0a6;"></div>
<div style="position:absolute;left:938.4px;top:1392.8px;width:476px;height:2px;background:#dadce0;"></div>
<div class="t" style="top:1410.28px;font-size:23.4px;line-height:23.4px;color:#202124;left:938.4px;-webkit-text-stroke:0.28px currentColor;">United States</div>
<div class="t" style="top:1410.28px;font-size:23.4px;line-height:23.4px;color:#202124;right:2677.6px;text-align:right;-webkit-text-stroke:0.28px currentColor;">23K</div>
<div style="position:absolute;left:938.4px;top:1448px;width:248px;height:5px;background:#1a73e8;"></div>
<div style="position:absolute;left:938.4px;top:1453.6px;width:476px;height:2px;background:#e8eaed;"></div>
<div class="t" style="top:1468.48px;font-size:23.4px;line-height:23.4px;color:#202124;left:938.4px;-webkit-text-stroke:0.28px currentColor;">India</div>
<div class="t" style="top:1468.48px;font-size:23.4px;line-height:23.4px;color:#202124;right:2677.6px;text-align:right;-webkit-text-stroke:0.28px currentColor;">3.5K</div>
<div style="position:absolute;left:938.4px;top:1506.2px;width:40.4px;height:5px;background:#1a73e8;"></div>
<div style="position:absolute;left:938.4px;top:1511.8px;width:476px;height:2px;background:#e8eaed;"></div>
<div class="t" style="top:1526.72px;font-size:23.4px;line-height:23.4px;color:#202124;left:938.4px;-webkit-text-stroke:0.28px currentColor;">China</div>
<div class="t" style="top:1526.72px;font-size:23.4px;line-height:23.4px;color:#202124;right:2677.6px;text-align:right;-webkit-text-stroke:0.28px currentColor;">3K</div>
<div style="position:absolute;left:938.4px;top:1564.4px;width:35.6px;height:5px;background:#1a73e8;"></div>
<div style="position:absolute;left:938.4px;top:1570px;width:476px;height:2px;background:#e8eaed;"></div>
<div class="t" style="top:1584.88px;font-size:23.4px;line-height:23.4px;color:#202124;left:938.4px;-webkit-text-stroke:0.28px currentColor;">Canada</div>
<div class="t" style="top:1584.88px;font-size:23.4px;line-height:23.4px;color:#202124;right:2677.6px;text-align:right;-webkit-text-stroke:0.28px currentColor;">2.2K</div>
<div style="position:absolute;left:938.4px;top:1622.6px;width:23.6px;height:5px;background:#1a73e8;"></div>
<div style="position:absolute;left:938.4px;top:1628.2px;width:476px;height:2px;background:#e8eaed;"></div>
<div class="t" style="top:1643.08px;font-size:23.4px;line-height:23.4px;color:#202124;left:938.4px;-webkit-text-stroke:0.28px currentColor;">Japan</div>
<div class="t" style="top:1643.08px;font-size:23.4px;line-height:23.4px;color:#202124;right:2677.6px;text-align:right;-webkit-text-stroke:0.28px currentColor;">1.5K</div>
<div style="position:absolute;left:938.4px;top:1680.8px;width:16.8px;height:5px;background:#1a73e8;"></div>
<div style="position:absolute;left:938.4px;top:1686.4px;width:476px;height:2px;background:#e8eaed;"></div>
<div class="t" style="top:1701.28px;font-size:23.4px;line-height:23.4px;color:#202124;left:938.4px;-webkit-text-stroke:0.28px currentColor;">Taiwan</div>
<div class="t" style="top:1701.28px;font-size:23.4px;line-height:23.4px;color:#202124;right:2677.6px;text-align:right;-webkit-text-stroke:0.28px currentColor;">1.4K</div>
<div style="position:absolute;left:938.4px;top:1739px;width:15.2px;height:5px;background:#1a73e8;"></div>
<div style="position:absolute;left:938.4px;top:1744.6px;width:476px;height:2px;background:#e8eaed;"></div>
<div class="t" style="top:1759.52px;font-size:23.4px;line-height:23.4px;color:#202124;left:938.4px;-webkit-text-stroke:0.28px currentColor;">South Korea</div>
<div class="t" style="top:1759.52px;font-size:23.4px;line-height:23.4px;color:#202124;right:2677.6px;text-align:right;-webkit-text-stroke:0.28px currentColor;">706</div>
<div style="position:absolute;left:938.4px;top:1797.2px;width:8.4px;height:5px;background:#1a73e8;"></div>
<svg style="position:absolute;left:1402px;top:1892.8px;overflow:visible" width="24" height="20.8" viewBox="0 0 6 5.2"><path d="M0 2.6H5.2M3 0.4L5.3 2.6L3 4.8" fill="none" stroke="#1a73e8" stroke-width="0.8"/></svg>
<div class="t" style="top:1893.28px;font-size:22.52px;line-height:22.52px;color:#1a73e8;font-weight:700;left:1289.24px;width:91.96px;text-align:right;clip-path:inset(-16px -1.2px -16px -1.2px);">ดูประเทศ</div>
<svg style="position:absolute;left:0px;top:0px;overflow:visible" width="4092" height="1972" viewBox="0 0 1023 493"><g transform="translate(66,350) scale(0.20284)"><polygon points="34,82 50,72 72,66 98,72 106,84 102,100 104,116 94,116 80,110 66,116 52,124 38,130 42,114 48,104 34,98" fill="#174ea6"/><polygon points="24,128 40,122 42,126 26,132" fill="#174ea6"/><polygon points="103,84 130,82 160,88 185,95 204,100 200,114 196,126 202,140 214,152 224,142 226,122 238,112 252,122 262,140 268,154 262,164 254,170 268,172 262,183 244,180 232,187 216,182 200,172 180,169 150,167 106,167 99,142 102,114 100,100" fill="#1967d2"/><polygon points="218,76 235,70 250,84 263,104 252,112 240,99 226,93" fill="#1967d2"/><polygon points="212,46 244,32 276,28 266,46 242,56 226,62" fill="#1967d2"/><polygon points="150,68 174,61 196,72 186,86 160,83" fill="#1967d2"/><polygon points="190,50 208,48 214,62 200,68" fill="#1967d2"/><polygon points="168,48 184,44 188,56 174,58" fill="#1967d2"/><polygon points="258,168 270,166 268,176 260,176" fill="#1967d2"/><polygon points="196,76 212,74 216,88 202,92" fill="#1967d2"/><polygon points="236,100 248,104 246,116 236,112" fill="#1967d2"/><polygon points="150,40 166,36 170,46 156,50" fill="#1967d2"/><polygon points="222,64 236,60 240,70 228,74" fill="#1967d2"/><polygon points="260,46 276,36 300,30 332,28 362,36 356,54 346,74 338,92 322,108 308,124 294,132 283,122 279,100 276,80 268,64" fill="#dadce0"/><polygon points="106,169 150,169 180,171 200,174 216,184 232,189 244,182 258,184 263,176 266,184 252,193 241,201 233,213 226,223 229,236 223,239 215,228 200,222 186,224 176,233 165,226 150,222 130,218 112,212 101,199 98,184" fill="#174ea6"/><polygon points="114,214 130,220 150,224 165,228 171,240 179,250 191,247 196,255 186,262 176,266 190,272 201,281 211,289 205,293 190,283 176,272 160,259 145,246 132,233 124,225" fill="#1967d2"/><polygon points="110,214 116,216 126,240 122,240" fill="#1967d2"/><polygon points="200,250 224,253 226,257 204,255" fill="#1967d2"/><polygon points="232,262 244,262 244,267 232,267" fill="#4285f4"/><polygon points="195,291 210,283 230,285 246,292 261,300 276,312 301,322 296,341 286,361 276,379 262,393 251,401 246,416 239,431 236,450 241,463 228,461 222,441 220,416 222,396 215,381 205,363 192,346 185,326 188,306" fill="#1967d2"/><polygon points="222,346 240,344 250,356 246,372 232,372 222,362" fill="#3079e6"/><polygon points="188,306 200,300 206,312 198,324 188,322" fill="#3079e6"/><polygon points="246,292 262,300 258,306 244,302" fill="#4285f4"/><polyline points="205,300 222,318 240,318 250,330 246,344" fill="none" stroke="#fff" stroke-width="1" opacity="0.6"/><polyline points="222,362 232,372 236,395 246,400 251,401" fill="none" stroke="#fff" stroke-width="1" opacity="0.6"/><polyline points="215,381 226,380 232,400 234,430 238,455" fill="none" stroke="#fff" stroke-width="1" opacity="0.6"/><polyline points="102,114 106,167" fill="none" stroke="#fff" stroke-width="1" opacity="0.6"/></g><g transform="translate(130,350) scale(0.20284)"><polygon points="135,120 150,105 170,100 185,95 200,85 215,95 225,80 235,65 255,55 280,62 300,70 330,65 360,62 390,68 420,68 440,78 438,95 425,105 420,120 430,137 426,152 415,141 405,126 385,126 371,136 381,151 371,161 352,153 340,170 315,164 290,161 268,170 262,164 240,154 215,149 200,157 186,164 170,168 150,160 140,145" fill="#1967d2"/><polygon points="232,36 246,40 240,46 230,42" fill="#1967d2"/><polygon points="176,62 186,66 192,82 188,100 184,84" fill="#1967d2"/><polygon points="330,44 344,48 336,54" fill="#1967d2"/><polygon points="186,165 200,158 215,150 240,155 263,166 259,181 241,191 221,186 206,193 191,186 181,176" fill="#4285f4"/><polygon points="270,171 290,162 315,165 339,171 331,186 306,193 281,186" fill="#4285f4"/><polygon points="250,193 262,181 270,173 281,188 306,195 333,188 341,172 353,155 371,163 379,153 386,161 373,179 361,191 366,211 361,229 349,243 331,249 316,241 301,233 281,226 266,216 253,206" fill="#1967d2"/><polygon points="206,193 222,187 242,192 252,204 240,208 226,204 212,202" fill="#4285f4"/><polygon points="240,215 255,212 268,222 282,232 296,236 291,246 279,251 271,269 263,286 256,273 249,253 239,241 235,226" fill="#1967d2"/><polygon points="266,290 272,290 272,300 267,298" fill="#4285f4"/><polygon points="218,206 245,200 252,212 240,216 236,228 228,240 222,226" fill="#4285f4"/><polygon points="185,206 216,205 224,226 222,240 205,238 192,226" fill="#4285f4"/><polygon points="296,236 318,242 331,250 336,265 346,281 341,293 331,286 323,271 316,263 311,276 318,296 326,311 319,313 308,296 303,271 300,251" fill="#1967d2"/><polygon points="310,297 320,300 336,322 330,326 316,310" fill="#1967d2"/><polygon points="345,296 362,292 368,306 358,316 346,310" fill="#1967d2"/><polygon points="336,328 366,332 366,336 336,333" fill="#1967d2"/><polygon points="372,300 384,298 382,318 376,316" fill="#1967d2"/><polygon points="398,312 420,314 442,324 440,332 420,326 400,322" fill="#1967d2"/><polygon points="370,254 380,256 386,288 378,290 372,272" fill="#1967d2"/><polygon points="370,230 376,230 375,240 370,238" fill="#1967d2"/><polygon points="384,174 392,172 395,194 388,196" fill="#1967d2"/><polygon points="418,122 424,124 422,146 414,162 404,170 400,166 410,156 416,140" fill="#1967d2"/><polygon points="412,96 418,98 420,120 414,118" fill="#1967d2"/><polygon points="345,372 360,360 375,350 385,345 395,350 405,340 412,348 418,340 425,355 432,370 439,385 436,400 426,412 410,418 398,410 385,400 365,402 350,406 345,390" fill="#1967d2"/><polygon points="407,425 416,425 414,433 408,432" fill="#1967d2"/><polygon points="470,426 480,420 484,424 472,434" fill="#1967d2"/><polygon points="452,440 468,432 470,438 456,447" fill="#1967d2"/><polygon points="100,105 115,95 130,92 141,100 136,120 128,135 118,145 108,140 101,150 95,135" fill="#4285f4"/><polygon points="118,100 130,95 140,102 136,122 128,134 122,120" fill="#1967d2"/><polygon points="95,45 112,42 116,56 100,60" fill="#8ab4f8"/><polygon points="25,112 40,110 42,120 28,122" fill="#8ab4f8"/><polygon points="55,190 60,175 70,168 82,160 95,155 110,150 125,148 140,150 150,160 160,170 170,170 181,178 176,190 161,193 150,188 140,195 128,192 118,199 108,195 98,188 88,190 78,196 70,206 58,209 52,200" fill="#1967d2"/><polygon points="118,150 140,150 150,160 146,172 128,170 118,162" fill="#4285f4"/><polygon points="95,170 110,168 114,180 100,184" fill="#4285f4"/><polygon points="62,148 72,142 76,160 69,171 60,166" fill="#1967d2"/><polygon points="51,158 58,157 58,168 52,168" fill="#4285f4"/><polygon points="98,190 106,192 116,208 112,212 104,200" fill="#1967d2"/><polygon points="135,198 175,195 186,205 171,213 140,212" fill="#1967d2"/><polygon points="160,225 176,221 196,240 206,256 196,269 181,266 170,250 162,238" fill="#1967d2"/><polygon points="150,214 170,214 176,222 160,226" fill="#4285f4"/><polygon points="35,245 45,232 60,222 80,215 100,215 115,220 130,225 150,228 160,232 165,250 175,270 185,286 201,285 191,305 179,325 171,345 161,365 151,385 136,396 118,393 112,375 108,355 102,335 100,315 95,300 80,296 60,296 45,286 35,270 30,255" fill="#dadce0"/><polygon points="45,232 60,222 64,236 52,246 42,246" fill="#1967d2"/><polygon points="60,222 80,215 98,216 100,240 92,262 76,256 62,244" fill="#1967d2"/><polygon points="134,228 158,232 162,254 138,254" fill="#1967d2"/><polygon points="76,276 100,276 102,296 82,298" fill="#1967d2"/><polygon points="46,262 62,262 64,284 50,286" fill="#8ab4f8"/><polygon points="62,282 76,280 80,296 62,296" fill="#4285f4"/><polygon points="160,278 186,288 198,288 188,306 176,312 160,306" fill="#4285f4"/><polygon points="138,256 162,256 166,276 158,282 140,280" fill="#aecbfa"/><polygon points="104,306 150,304 156,330 148,350 112,352 104,330" fill="#8ab4f8"/><polygon points="150,310 176,314 170,344 152,346" fill="#4285f4"/><polygon points="112,372 150,366 156,382 136,396 118,393" fill="#1967d2"/><polygon points="112,352 132,352 132,372 114,374" fill="#aecbfa"/><polygon points="180,346 190,342 194,362 184,378 178,366" fill="#8ab4f8"/><polyline points="100,240 128,246 138,256" fill="none" stroke="#fff" stroke-width="1" opacity="0.7"/><polyline points="92,262 104,276 124,280 140,280" fill="none" stroke="#fff" stroke-width="1" opacity="0.7"/><polyline points="62,244 60,262" fill="none" stroke="#fff" stroke-width="1" opacity="0.7"/><polyline points="70,168 78,196" fill="none" stroke="#fff" stroke-width="1.6" opacity="0.75"/><polyline points="82,160 88,190" fill="none" stroke="#fff" stroke-width="1.6" opacity="0.75"/><polyline points="95,155 98,188" fill="none" stroke="#fff" stroke-width="1.6" opacity="0.75"/><polyline points="110,150 108,195" fill="none" stroke="#fff" stroke-width="1.6" opacity="0.75"/><polyline points="125,148 128,192" fill="none" stroke="#fff" stroke-width="1.6" opacity="0.75"/><polyline points="140,150 140,195" fill="none" stroke="#fff" stroke-width="1.6" opacity="0.75"/><polyline points="150,160 150,188" fill="none" stroke="#fff" stroke-width="1.6" opacity="0.75"/><polyline points="60,178 176,182" fill="none" stroke="#fff" stroke-width="1.6" opacity="0.75"/><polyline points="70,192 160,172" fill="none" stroke="#fff" stroke-width="1.6" opacity="0.75"/><polyline points="100,105 128,135" fill="none" stroke="#fff" stroke-width="1.6" opacity="0.75"/><polyline points="112,96 118,145" fill="none" stroke="#fff" stroke-width="1.6" opacity="0.75"/><polyline points="250,193 281,226 316,241" fill="none" stroke="#fff" stroke-width="1.2" opacity="0.7"/><polyline points="240,215 268,222" fill="none" stroke="#fff" stroke-width="1.2" opacity="0.7"/><polyline points="296,236 300,251" fill="none" stroke="#fff" stroke-width="1.2" opacity="0.7"/><polyline points="185,206 192,226 205,238" fill="none" stroke="#fff" stroke-width="1.2" opacity="0.7"/><polyline points="218,206 222,226" fill="none" stroke="#fff" stroke-width="1.2" opacity="0.7"/></g></svg>
<div class="t" style="top:1182.76px;font-size:22.84px;line-height:22.84px;color:#202124;left:1488.8px;width:277px;clip-path:inset(-16px -1.2px -16px -1.2px);">แนวโน้มของผู้ใช้ที่ใช้งานอยู่</div>
<div class="t" style="top:1273.76px;font-size:23.24px;line-height:23.24px;color:#202124;left:1532.8px;width:334.08px;clip-path:inset(-16px -1.2px -16px -1.2px);-webkit-text-stroke:0.16px currentColor;">กิจกรรมผู้ใช้ในช่วงระยะเวลาหนึ่ง</div>
<div style="position:absolute;left:1532.8px;top:1300.8px;width:332px;height:2px;border-top:2px dashed #5f6368;"></div>
<div style="position:absolute;left:2326px;top:1264.8px;width:109.6px;height:49.6px;background:#fff;border:2.8px solid #d5d8dc;border-radius:26px;box-sizing:border-box;"></div>
<svg style="position:absolute;left:2339.6px;top:1271.6px;overflow:visible" width="34.4" height="34.4" viewBox="0 0 8.6 8.6"><circle cx="4.3" cy="4.3" r="3.6" fill="none" stroke="#188038" stroke-width="1.0"/><path d="M2.3 4.5L3.7 5.9L6.5 2.9" fill="none" stroke="#188038" stroke-width="1.0"/></svg>
<svg style="position:absolute;left:2395.6px;top:1284.4px;overflow:visible" width="16" height="9.2" viewBox="0 0 4 2.3"><path d="M0 0h4l-2 2.3z" fill="#5f6368"/></svg>
<svg style="position:absolute;left:0px;top:0px;overflow:visible" width="4092" height="1972" viewBox="0 0 1023 493"><line x1="384.8" x2="543.5" y1="338.6" y2="338.6" stroke="#e8eaed" stroke-width="0.5"/><line x1="384.8" x2="543.5" y1="366.5" y2="366.5" stroke="#e8eaed" stroke-width="0.5"/><line x1="384.8" x2="543.5" y1="394.3" y2="394.3" stroke="#e8eaed" stroke-width="0.5"/><line x1="384.8" x2="543.5" y1="422.2" y2="422.2" stroke="#e8eaed" stroke-width="0.5"/><line x1="384.8" x2="543.5" y1="450.0" y2="450.0" stroke="#dadce0" stroke-width="0.5"/><polyline points="384.8,372.8 396.7,373.6 407.2,374.5 417.8,374.9 426.2,374.1 436.8,375.3 449.4,376.2 460.0,377.0 470.5,377.4 481.1,377.4 491.6,377.4 502.2,377.0 512.7,376.2 523.3,379.1 533.8,381.2 542.3,382.5" fill="none" stroke="#4285f4" stroke-width="1.2" stroke-linejoin="round"/><polyline points="384.8,430.2 390.3,431.5 398.8,432.3 415.7,433.2 432.5,432.7 449.4,432.7 470.5,432.3 491.6,432.3 500.1,431.5 508.5,432.3 519.1,431.5 529.6,432.3 542.3,433.6" fill="none" stroke="#5e6be8" stroke-width="1.2" stroke-linejoin="round"/><polyline points="384.8,446.7 398.8,447.5 407.2,446.7 415.7,447.5 424.1,446.7 449.4,447.1 457.9,446.2 474.8,446.7 491.6,447.5 504.3,446.2 525.4,447.1 533.8,447.5 542.3,447.1" fill="none" stroke="#8e24aa" stroke-width="1.2" stroke-linejoin="round"/><circle cx="570.6" cy="342.4" r="1.25" fill="#1a73e8"/><circle cx="570.6" cy="373.2" r="1.25" fill="#4e5be4"/><circle cx="570.6" cy="404.5" r="1.25" fill="#7b1fa2"/></svg>
<div class="t" style="top:1359px;font-size:20.4px;line-height:20.4px;color:#5f6368;right:1857.6px;text-align:right;-webkit-text-stroke:0.28px currentColor;">80K</div>
<div class="t" style="top:1469.4px;font-size:20.4px;line-height:20.4px;color:#5f6368;right:1857.6px;text-align:right;-webkit-text-stroke:0.28px currentColor;">60K</div>
<div class="t" style="top:1579.8px;font-size:20.4px;line-height:20.4px;color:#5f6368;right:1857.6px;text-align:right;-webkit-text-stroke:0.28px currentColor;">40K</div>
<div class="t" style="top:1689.8px;font-size:20.4px;line-height:20.4px;color:#5f6368;right:1857.6px;text-align:right;-webkit-text-stroke:0.28px currentColor;">20K</div>
<div class="t" style="top:1799.8px;font-size:20.4px;line-height:20.4px;color:#5f6368;right:1857.6px;text-align:right;-webkit-text-stroke:0.28px currentColor;">0</div>
<div class="t" style="top:1811.4px;font-size:20.4px;line-height:20.4px;color:#5f6368;left:1631.2px;width:80px;text-align:center;-webkit-text-stroke:0.28px currentColor;">02</div>
<div class="t" style="top:1811.4px;font-size:20.4px;line-height:20.4px;color:#5f6368;left:1780px;width:80px;text-align:center;-webkit-text-stroke:0.28px currentColor;">09</div>
<div class="t" style="top:1811.4px;font-size:20.4px;line-height:20.4px;color:#5f6368;left:1941.6px;width:80px;text-align:center;-webkit-text-stroke:0.28px currentColor;">16</div>
<div class="t" style="top:1811.4px;font-size:20.4px;line-height:20.4px;color:#5f6368;left:2093.6px;width:80px;text-align:center;-webkit-text-stroke:0.28px currentColor;">23</div>
<div class="t" style="top:1835.56px;font-size:19.2px;line-height:19.2px;color:#5f6368;left:1652.12px;width:38.16px;text-align:center;clip-path:inset(-16px -1.2px -16px -1.2px);">มี.ค.</div>
<div class="t" style="top:1360.76px;font-size:20.96px;line-height:20.96px;color:#3c4043;left:2296px;width:57.24px;clip-path:inset(-16px -1.2px -16px -1.2px);">30 วัน</div>
<div class="t" style="top:1390.4px;font-size:40px;line-height:40px;color:#202124;left:2295.2px;">49K</div>
<div class="t" style="top:1483.56px;font-size:21.92px;line-height:21.92px;color:#3c4043;left:2296px;width:47.56px;clip-path:inset(-16px -1.2px -16px -1.2px);">7 วัน</div>
<div class="t" style="top:1516.8px;font-size:40px;line-height:40px;color:#202124;left:2295.2px;">12K</div>
<div class="t" style="top:1608.76px;font-size:21.92px;line-height:21.92px;color:#3c4043;left:2296px;width:47.56px;clip-path:inset(-16px -1.2px -16px -1.2px);">1 วัน</div>
<div class="t" style="top:1639.2px;font-size:40px;line-height:40px;color:#202124;left:2295.2px;">1.8K</div>
<div class="t" style="top:1182.56px;font-size:23.28px;line-height:23.28px;color:#202124;left:2508.8px;width:248.44px;clip-path:inset(-16px -1.2px -16px -1.2px);">คุณคงผู้ใช้ไว้ได้ดีเพียงใด</div>
<div class="t" style="top:1273.6px;font-size:23.6px;line-height:23.6px;color:#202124;left:2552.8px;width:384.64px;clip-path:inset(-16px -1.2px -16px -1.2px);-webkit-text-stroke:0.16px currentColor;">กิจกรรมผู้ใช้ตามกลุ่มประชากรตามรุ่น</div>
<div class="t" style="top:1309.72px;font-size:21.52px;line-height:21.52px;color:#5f6368;left:2552.8px;width:254.88px;clip-path:inset(-16px -1.2px -16px -1.2px);">อิงตามข้อมูลอุปกรณ์เท่านั้น</div>
<div style="position:absolute;left:3349.6px;top:1264.8px;width:108px;height:49.6px;background:#fff;border:2.8px solid #d5d8dc;border-radius:26px;box-sizing:border-box;"></div>
<svg style="position:absolute;left:3363.2px;top:1271.6px;overflow:visible" width="34.4" height="34.4" viewBox="0 0 8.6 8.6"><circle cx="4.3" cy="4.3" r="3.6" fill="none" stroke="#188038" stroke-width="1.0"/><path d="M2.3 4.5L3.7 5.9L6.5 2.9" fill="none" stroke="#188038" stroke-width="1.0"/></svg>
<svg style="position:absolute;left:3419.2px;top:1284.4px;overflow:visible" width="16" height="9.2" viewBox="0 0 4 2.3"><path d="M0 0h4l-2 2.3z" fill="#5f6368"/></svg>
<div class="t" style="top:1370.56px;font-size:21.48px;line-height:21.48px;color:#3c4043;left:2769.4px;width:86.84px;text-align:center;clip-path:inset(-16px -1.2px -16px -1.2px);">สัปดาห์ 0</div>
<div class="t" style="top:1370.56px;font-size:21.48px;line-height:21.48px;color:#3c4043;left:2886.2px;width:86.84px;text-align:center;clip-path:inset(-16px -1.2px -16px -1.2px);">สัปดาห์ 1</div>
<div class="t" style="top:1370.56px;font-size:21.48px;line-height:21.48px;color:#3c4043;left:3003.4px;width:86.84px;text-align:center;clip-path:inset(-16px -1.2px -16px -1.2px);">สัปดาห์ 2</div>
<div class="t" style="top:1370.56px;font-size:21.48px;line-height:21.48px;color:#3c4043;left:3120.2px;width:86.84px;text-align:center;clip-path:inset(-16px -1.2px -16px -1.2px);">สัปดาห์ 3</div>
<div class="t" style="top:1370.56px;font-size:21.48px;line-height:21.48px;color:#3c4043;left:3237px;width:86.84px;text-align:center;clip-path:inset(-16px -1.2px -16px -1.2px);">สัปดาห์ 4</div>
<div class="t" style="top:1370.56px;font-size:21.48px;line-height:21.48px;color:#3c4043;left:3354.2px;width:86.84px;text-align:center;clip-path:inset(-16px -1.2px -16px -1.2px);">สัปดาห์ 5</div>
<div style="position:absolute;left:2552.8px;top:1345.6px;width:904px;height:2px;background:#e8eaed;"></div>
<div style="position:absolute;left:2552.8px;top:1409.2px;width:904px;height:2px;background:#dadce0;"></div>
<div class="t" style="top:1429.8px;font-size:23.16px;line-height:23.16px;color:#202124;left:2554.4px;width:114.76px;clip-path:inset(-16px -1.2px -16px -1.2px);-webkit-text-stroke:0.16px currentColor;">ผู้ใช้ทั้งหมด</div>
<div class="t" style="top:1429.52px;font-size:23.4px;line-height:23.4px;color:#202124;left:2752.8px;width:120px;text-align:center;-webkit-text-stroke:0.28px currentColor;">100.0%</div>
<div class="t" style="top:1429.52px;font-size:23.4px;line-height:23.4px;color:#202124;left:2869.6px;width:120px;text-align:center;-webkit-text-stroke:0.28px currentColor;">3.6%</div>
<div class="t" style="top:1429.52px;font-size:23.4px;line-height:23.4px;color:#202124;left:2986.8px;width:120px;text-align:center;-webkit-text-stroke:0.28px currentColor;">1.8%</div>
<div class="t" style="top:1429.52px;font-size:23.4px;line-height:23.4px;color:#202124;left:3103.6px;width:120px;text-align:center;-webkit-text-stroke:0.28px currentColor;">1.1%</div>
<div class="t" style="top:1429.52px;font-size:23.4px;line-height:23.4px;color:#202124;left:3220.4px;width:120px;text-align:center;-webkit-text-stroke:0.28px currentColor;">1.0%</div>
<div class="t" style="top:1429.52px;font-size:23.4px;line-height:23.4px;color:#202124;left:3337.6px;width:120px;text-align:center;-webkit-text-stroke:0.28px currentColor;">0.7%</div>
<div style="position:absolute;left:2552.8px;top:1469.2px;width:904px;height:2px;background:#dadce0;"></div>
<div class="t" style="top:1492.2px;font-size:23.2px;line-height:23.2px;color:#202124;left:2552.8px;width:158.68px;clip-path:inset(-16px -1.2px -16px -1.2px);">9 ก.พ. - 15 ก.พ.</div>
<div class="t" style="top:1555px;font-size:23.2px;line-height:23.2px;color:#202124;left:2552.8px;width:171.6px;clip-path:inset(-16px -1.2px -16px -1.2px);">16 ก.พ. - 22 ก.พ.</div>
<div class="t" style="top:1617.8px;font-size:23.2px;line-height:23.2px;color:#202124;left:2552.8px;width:160.16px;clip-path:inset(-16px -1.2px -16px -1.2px);">23 ก.พ. - 1 มี.ค.</div>
<div class="t" style="top:1680.6px;font-size:23.2px;line-height:23.2px;color:#202124;left:2552.8px;width:148.72px;clip-path:inset(-16px -1.2px -16px -1.2px);">2 มี.ค. - 8 มี.ค.</div>
<div class="t" style="top:1743.4px;font-size:23.2px;line-height:23.2px;color:#202124;left:2552.8px;width:161.64px;clip-path:inset(-16px -1.2px -16px -1.2px);">9 มี.ค. - 15 มี.ค.</div>
<div class="t" style="top:1806.2px;font-size:23.2px;line-height:23.2px;color:#202124;left:2552.8px;width:174.52px;clip-path:inset(-16px -1.2px -16px -1.2px);">16 มี.ค. - 22 มี.ค.</div>
<svg style="position:absolute;left:0px;top:0px;overflow:visible" width="4092" height="1972" viewBox="0 0 1023 493"><rect x="689.40" y="368.90" width="27.7" height="14.1" fill="#174ea6"/><rect x="718.60" y="368.90" width="27.7" height="14.1" fill="#1967d2"/><rect x="747.80" y="368.90" width="27.7" height="14.1" fill="#8ab4f8"/><rect x="777.00" y="368.90" width="27.7" height="14.1" fill="#aecbfa"/><rect x="806.20" y="368.90" width="27.7" height="14.1" fill="#aecbfa"/><rect x="835.40" y="368.90" width="27.7" height="14.1" fill="#aecbfa"/><line x1="638.2" x2="864.2" y1="383.80" y2="383.80" stroke="#e8eaed" stroke-width="0.5"/><rect x="689.40" y="384.60" width="27.7" height="14.1" fill="#174ea6"/><rect x="718.60" y="384.60" width="27.7" height="14.1" fill="#4285f4"/><rect x="747.80" y="384.60" width="27.7" height="14.1" fill="#8ab4f8"/><rect x="777.00" y="384.60" width="27.7" height="14.1" fill="#aecbfa"/><rect x="806.20" y="384.60" width="27.7" height="14.1" fill="#aecbfa"/><line x1="638.2" x2="864.2" y1="399.50" y2="399.50" stroke="#e8eaed" stroke-width="0.5"/><rect x="689.40" y="400.30" width="27.7" height="14.1" fill="#174ea6"/><rect x="718.60" y="400.30" width="27.7" height="14.1" fill="#4285f4"/><rect x="747.80" y="400.30" width="27.7" height="14.1" fill="#8ab4f8"/><rect x="777.00" y="400.30" width="27.7" height="14.1" fill="#aecbfa"/><line x1="638.2" x2="864.2" y1="415.20" y2="415.20" stroke="#e8eaed" stroke-width="0.5"/><rect x="689.40" y="416.00" width="27.7" height="14.1" fill="#174ea6"/><rect x="718.60" y="416.00" width="27.7" height="14.1" fill="#1967d2"/><rect x="747.80" y="416.00" width="27.7" height="14.1" fill="#8ab4f8"/><line x1="638.2" x2="864.2" y1="430.90" y2="430.90" stroke="#e8eaed" stroke-width="0.5"/><rect x="689.40" y="431.70" width="27.7" height="14.1" fill="#174ea6"/><rect x="718.60" y="431.70" width="27.7" height="14.1" fill="#1967d2"/><line x1="638.2" x2="864.2" y1="446.60" y2="446.60" stroke="#e8eaed" stroke-width="0.5"/><rect x="689.40" y="447.40" width="27.7" height="14.1" fill="#174ea6"/><line x1="638.2" x2="864.2" y1="462.30" y2="462.30" stroke="#e8eaed" stroke-width="0.5"/></svg>
<div class="t" style="top:1881.24px;font-size:22.68px;line-height:22.68px;color:#202124;left:2552.8px;width:236.36px;clip-path:inset(-16px -1.2px -16px -1.2px);">6 สัปดาห์ สิ้นสุด มี.ค. 22</div>
<svg style="position:absolute;left:3444px;top:1892.8px;overflow:visible" width="24" height="20.8" viewBox="0 0 6 5.2"><path d="M0 2.6H5.2M3 0.4L5.3 2.6L3 4.8" fill="none" stroke="#1a73e8" stroke-width="0.8"/></svg>
<div class="t" style="top:1893.2px;font-size:22.76px;line-height:22.76px;color:#1a73e8;font-weight:700;left:3273.96px;width:149.24px;text-align:right;clip-path:inset(-16px -1.2px -16px -1.2px);">ดูการรักษาผู้ใช้</div>
<div class="t" style="top:1182.76px;font-size:22.8px;line-height:22.8px;color:#202124;left:3534px;width:357.96px;clip-path:inset(-16px -1.2px -16px -1.2px);">ผู้ใช้ดูหน้าเว็บและหน้าจอใดมากที่สุด</div>
<div class="t" style="top:1273.68px;font-size:22.56px;line-height:22.56px;color:#202124;left:3576px;width:124.48px;clip-path:inset(-16px -1.2px -16px -1.2px);">จำนวนการดู</div>
<div style="position:absolute;left:3576px;top:1298.4px;width:122.4px;height:2px;border-top:2px dashed #5f6368;"></div>
<div class="t" style="top:1273.84px;font-size:22.2px;line-height:22.2px;color:#202124;left:3707.2px;width:43.52px;clip-path:inset(-16px -1.2px -16px -1.2px);">ตาม</div>
<div class="t" style="top:1309.8px;font-size:23.16px;line-height:23.16px;color:#202124;left:3576px;width:260.16px;clip-path:inset(-16px -1.2px -16px -1.2px);">ชื่อหน้าเว็บและคลาสหน้...</div>
<div style="position:absolute;left:3576px;top:1334.8px;width:258px;height:2px;border-top:2px dashed #5f6368;"></div>
<div style="position:absolute;left:3929.6px;top:1264.8px;width:108.8px;height:49.6px;background:#fff;border:2.8px solid #d5d8dc;border-radius:26px;box-sizing:border-box;"></div>
<svg style="position:absolute;left:3943.2px;top:1271.6px;overflow:visible" width="34.4" height="34.4" viewBox="0 0 8.6 8.6"><circle cx="4.3" cy="4.3" r="3.6" fill="none" stroke="#188038" stroke-width="1.0"/><path d="M2.3 4.5L3.7 5.9L6.5 2.9" fill="none" stroke="#188038" stroke-width="1.0"/></svg>
<svg style="position:absolute;left:3999.2px;top:1284.4px;overflow:visible" width="16" height="9.2" viewBox="0 0 4 2.3"><path d="M0 0h4l-2 2.3z" fill="#5f6368"/></svg>
<div class="t" style="top:1353.16px;font-size:22.84px;line-height:22.84px;color:#5f6368;left:3576px;width:225.92px;clip-path:inset(-16px -1.2px -16px -1.2px);">ชื่อหน้าเว็บและคลาส...</div>
<div style="position:absolute;left:3576px;top:1377.2px;width:224px;height:2px;border-top:2px dashed #9aa0a6;"></div>
<div class="t" style="top:1353.48px;font-size:22.12px;line-height:22.12px;color:#5f6368;left:3915.88px;width:122.12px;text-align:right;clip-path:inset(-16px -1.2px -16px -1.2px);">จำนวนการดู</div>
<div style="position:absolute;left:3918px;top:1377.2px;width:120px;height:2px;border-top:2px dashed #9aa0a6;"></div>
<div style="position:absolute;left:3576px;top:1392.8px;width:462px;height:2px;background:#dadce0;"></div>
<div class="t" style="top:1410.28px;font-size:23.4px;line-height:23.4px;color:#202124;left:3576px;-webkit-text-stroke:0.28px currentColor;">Home</div>
<div class="t" style="top:1410.28px;font-size:23.4px;line-height:23.4px;color:#202124;right:54px;text-align:right;-webkit-text-stroke:0.28px currentColor;">61K</div>
<div style="position:absolute;left:3576px;top:1448px;width:109.6px;height:5px;background:#1a73e8;"></div>
<div style="position:absolute;left:3576px;top:1453.6px;width:462px;height:2px;background:#e8eaed;"></div>
<div class="t" style="top:1468.48px;font-size:23.4px;line-height:23.4px;color:#202124;left:3576px;-webkit-text-stroke:0.28px currentColor;">Google Merch Shop</div>
<div class="t" style="top:1468.48px;font-size:23.4px;line-height:23.4px;color:#202124;right:54px;text-align:right;-webkit-text-stroke:0.28px currentColor;">20K</div>
<div style="position:absolute;left:3576px;top:1506.2px;width:35.6px;height:5px;background:#1a73e8;"></div>
<div style="position:absolute;left:3576px;top:1511.8px;width:462px;height:2px;background:#e8eaed;"></div>
<div class="t" style="top:1526.72px;font-size:23.4px;line-height:23.4px;color:#202124;left:3576px;-webkit-text-stroke:0.28px currentColor;">Apparel | Google Mer...</div>
<div class="t" style="top:1526.72px;font-size:23.4px;line-height:23.4px;color:#202124;right:54px;text-align:right;-webkit-text-stroke:0.28px currentColor;">10K</div>
<div style="position:absolute;left:3576px;top:1564.4px;width:18.8px;height:5px;background:#1a73e8;"></div>
<div style="position:absolute;left:3576px;top:1570px;width:462px;height:2px;background:#e8eaed;"></div>
<div class="t" style="top:1584.88px;font-size:23.4px;line-height:23.4px;color:#202124;left:3576px;-webkit-text-stroke:0.28px currentColor;">Men's / Unisex | Goo...</div>
<div class="t" style="top:1584.88px;font-size:23.4px;line-height:23.4px;color:#202124;right:54px;text-align:right;-webkit-text-stroke:0.28px currentColor;">9.1K</div>
<div style="position:absolute;left:3576px;top:1622.6px;width:15.2px;height:5px;background:#1a73e8;"></div>
<div style="position:absolute;left:3576px;top:1628.2px;width:462px;height:2px;background:#e8eaed;"></div>
<div class="t" style="top:1643.08px;font-size:23.4px;line-height:23.4px;color:#202124;left:3576px;-webkit-text-stroke:0.28px currentColor;">New | Google Merch ...</div>
<div class="t" style="top:1643.08px;font-size:23.4px;line-height:23.4px;color:#202124;right:54px;text-align:right;-webkit-text-stroke:0.28px currentColor;">8.3K</div>
<div style="position:absolute;left:3576px;top:1680.8px;width:13.6px;height:5px;background:#1a73e8;"></div>
<div style="position:absolute;left:3576px;top:1686.4px;width:462px;height:2px;background:#e8eaed;"></div>
<div class="t" style="top:1701.28px;font-size:23.4px;line-height:23.4px;color:#202124;left:3576px;-webkit-text-stroke:0.28px currentColor;">Sale | Google Merch ...</div>
<div class="t" style="top:1701.28px;font-size:23.4px;line-height:23.4px;color:#202124;right:54px;text-align:right;-webkit-text-stroke:0.28px currentColor;">7.3K</div>
<div style="position:absolute;left:3576px;top:1739px;width:12px;height:5px;background:#1a73e8;"></div>
<div style="position:absolute;left:3576px;top:1744.6px;width:462px;height:2px;background:#e8eaed;"></div>
<div class="t" style="top:1759.52px;font-size:23.4px;line-height:23.4px;color:#202124;left:3576px;-webkit-text-stroke:0.28px currentColor;">Bags | Google Merch...</div>
<div class="t" style="top:1759.52px;font-size:23.4px;line-height:23.4px;color:#202124;right:54px;text-align:right;-webkit-text-stroke:0.28px currentColor;">6.1K</div>
<div style="position:absolute;left:3576px;top:1797.2px;width:8.8px;height:5px;background:#1a73e8;"></div>
<svg style="position:absolute;left:4029.2px;top:1892px;overflow:visible" width="24" height="20.8" viewBox="0 0 6 5.2"><path d="M0 2.6H5.2M3 0.4L5.3 2.6L3 4.8" fill="none" stroke="#1a73e8" stroke-width="0.8"/></svg>
<div class="t" style="top:1892.24px;font-size:23.12px;line-height:23.12px;color:#1a73e8;font-weight:700;left:3834.48px;width:173.92px;text-align:right;clip-path:inset(-16px -1.2px -16px -1.2px);">ดูหน้าและหน้าจอ</div>
</div>
</body>
</html>
